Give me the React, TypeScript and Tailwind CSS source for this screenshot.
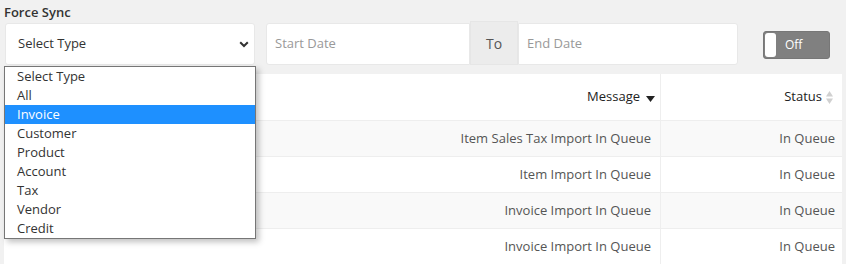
import React from "react";

const options = ["Select Type", "All", "Invoice", "Customer", "Product", "Account", "Tax", "Vendor", "Credit"];
const rows = [
  { msg: "Item Sales Tax Import In Queue", status: "In Queue" },
  { msg: "Item Import In Queue", status: "In Queue" },
  { msg: "Invoice Import In Queue", status: "In Queue" },
  { msg: "Invoice Import In Queue", status: "In Queue" },
];

export default function App() {
  return (
    <div
      className="relative w-[846px] h-[264px] overflow-hidden bg-[#f1f1f1] text-[#333]"
      style={{ fontFamily: '"Open Sans", "Noto Sans", sans-serif' }}
    >
      <div className="pl-[4px] pt-[3px] text-[13px] font-semibold leading-[18px] text-[#333]">Force Sync</div>

      <div className="flex items-start h-[53px]">
        <div className="mt-[2px] ml-[5px] w-[250px] h-[42px] flex items-center justify-between bg-white rounded-[3px] border border-[#e8e8e8] pl-[12px] pr-[5px] text-[13px] text-[#333]">
          <span>Select Type</span>
          <svg width="10" height="7" viewBox="0 0 10 7" className="mt-[1px]">
            <path d="M1.2 1.2 L5 5 L8.8 1.2" fill="none" stroke="#333" strokeWidth="2" />
          </svg>
        </div>
        <div className="mt-[2px] ml-[11px] w-[204px] h-[42px] flex items-center bg-white rounded-l-[3px] border border-[#e8e8e8] pl-[8px] text-[13px] text-[#999]">
          Start Date
        </div>
        <div className="w-[48px] h-[44px] flex items-center justify-center bg-[#ececec] border border-[#e6e6e6] text-[14px] text-[#555]">
          To
        </div>
        <div className="mt-[2px] w-[220px] h-[42px] flex items-center bg-white rounded-r-[3px] border border-[#e8e8e8] pl-[8px] text-[13px] text-[#999]">
          End Date
        </div>
        <div className="mt-[10px] ml-[25px] w-[67px] h-[28px] flex items-center bg-[#808080] rounded-[3px] border border-[#777] p-[1px]">
          <div className="w-[11px] h-full bg-white rounded-[3px]" />
          <span className="ml-[9px] text-[12px] text-white">Off</span>
        </div>
      </div>

      <div className="ml-[4px] w-[838px] bg-white">
        <div className="flex h-[47px] border-b border-[#eeeeee] text-[13px] text-[#222]">
          <div className="w-[252px]" />
          <div className="w-[405px] flex items-center justify-end pr-[5px] border-r border-[#eeeeee]">
            <span>Message</span>
            <svg width="9" height="6" viewBox="0 0 9 6" className="ml-[6px] mt-[3px]">
              <path d="M0 0 L9 0 L4.5 6 Z" fill="#222" />
            </svg>
          </div>
          <div className="flex-1 flex items-center justify-end pr-[9px]">
            <span>Status</span>
            <svg width="7" height="13" viewBox="0 0 7 13" className="ml-[4px]">
              <path d="M0 5.5 L7 5.5 L3.5 0 Z" fill="#d0d0d0" />
              <path d="M0 7.5 L7 7.5 L3.5 13 Z" fill="#d0d0d0" />
            </svg>
          </div>
        </div>
        {rows.map((r, i) => (
          <div
            key={i}
            className={`flex h-[36px] border-b border-[#eeeeee] text-[13px] text-[#555] ${i % 2 === 0 ? "bg-[#f9f9f9]" : "bg-white"}`}
          >
            <div className="w-[252px]" />
            <div className="w-[405px] flex items-center justify-end pr-[9px] border-r border-[#eeeeee]">{r.msg}</div>
            <div className="flex-1 flex items-center justify-end pr-[7px]">{r.status}</div>
          </div>
        ))}
      </div>

      <div className="absolute left-[4px] top-[66px] w-[252px] bg-white border border-[#767676] shadow-[3px_3px_6px_rgba(0,0,0,0.25)]">
        {options.map((o) => (
          <div
            key={o}
            className={`h-[19px] leading-[19px] pl-[12px] text-[13px] ${o === "Invoice" ? "bg-[#1e90ff] text-white" : "text-[#333]"}`}
          >
            {o}
          </div>
        ))}
      </div>
    </div>
  );
}
